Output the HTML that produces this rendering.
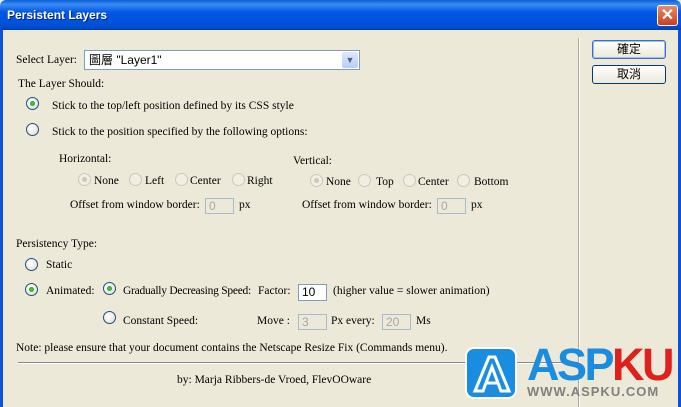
<!DOCTYPE html>
<html><head><meta charset="utf-8"><style>
*{margin:0;padding:0;box-sizing:border-box}
body{width:681px;height:407px;overflow:hidden;background:#ece9d8;font-family:"Liberation Serif","Noto Serif CJK SC",serif;font-size:11.5px;color:#000;position:relative}
.t{position:absolute;white-space:nowrap;line-height:14px}
.r{position:absolute;width:13px;height:13px;border-radius:50%;border:1px solid #1c5180;background:radial-gradient(circle at 40% 40%,#fff,#dcdad0)}
.r.on::after{content:"";position:absolute;left:3px;top:3px;width:5px;height:5px;border-radius:50%;background:radial-gradient(circle,#4cd24c,#1a8a1a)}
.r.d{border-color:#cac8bb;background:#f1efe2}
.r.d.on::after{background:#cac8bb}
.in{position:absolute;height:16px;border:1px solid #7f9db9;background:#fff;font-family:"Liberation Sans",sans-serif;font-size:12px;padding:0 3px;line-height:14px}
.in.d{background:#ece9d8;color:#a7a6aa;border-color:#a7bcd1}
.btn{position:absolute;width:74px;height:19px;border:1px solid #003c74;border-radius:3px;background:linear-gradient(#fff,#ece9d8);text-align:center;font-family:"Liberation Sans","Noto Sans CJK TC",sans-serif;font-size:12px;line-height:17px}
</style></head><body>
<div style="position:absolute;left:0;top:0;width:681px;height:30px;background:linear-gradient(#0a5fd8 0%,#3d8cf3 15%,#0058e6 40%,#0050d8 85%,#0040b8 100%);border-radius:6px 6px 0 0"></div>
<div class="t" style="left:7px;top:8px;color:#fff;font-family:'Liberation Sans',sans-serif;font-weight:bold;font-size:12px;text-shadow:1px 1px #0a246a">Persistent Layers</div>
<div style="position:absolute;left:657px;top:5px;width:21px;height:21px;border:1px solid #fff;border-radius:3px;background:linear-gradient(#e88a6c,#c8401c);color:#fff;text-align:center;font:bold 16px/19px 'Liberation Sans',sans-serif">✕</div>
<div style="position:absolute;left:0;top:30px;width:3px;height:377px;background:#0a52d8"></div>
<div style="position:absolute;right:0;top:30px;width:3px;height:377px;background:#0a52d8"></div>
<div style="position:absolute;left:578px;top:38px;width:1px;height:369px;background:#aca899"></div>
<div style="position:absolute;left:579px;top:38px;width:1px;height:369px;background:#fff"></div>
<div class="btn" style="left:592px;top:40px;border-color:#3c6ec8;box-shadow:inset 0 0 0 1px #9fc0f0">確定</div>
<div class="btn" style="left:592px;top:65px">取消</div>

<div class="t" style="left:16px;top:53px">Select Layer:</div>
<div style="position:absolute;left:84px;top:50px;width:276px;height:20px;border:1px solid #7f9db9;background:#fff"></div>
<div class="t" style="left:89px;top:53px;font-family:'Liberation Sans','Noto Sans CJK TC',sans-serif;font-size:12px">圖層 "Layer1"</div>
<div style="position:absolute;left:342px;top:52px;width:16px;height:16px;background:linear-gradient(#dde8fc,#b8cdf7);border-radius:2px;color:#4d6185;font-size:9px;text-align:center;line-height:16px">▼</div>
<div class="t" style="left:18px;top:77px">The Layer Should:</div>
<div class="r on" style="left:26px;top:97px"></div><div class="t" style="left:52px;top:99px">Stick to the top/left position defined by its CSS style</div>
<div class="r" style="left:26px;top:123px"></div><div class="t" style="left:52px;top:125px">Stick to the position specified by the following options:</div>

<div class="t" style="left:59px;top:152px">Horizontal:</div>
<div class="r d on" style="left:78px;top:173px"></div><div class="t" style="left:94px;top:174px">None</div>
<div class="r d" style="left:129px;top:173px"></div><div class="t" style="left:145px;top:174px">Left</div>
<div class="r d" style="left:175px;top:173px"></div><div class="t" style="left:190px;top:174px">Center</div>
<div class="r d" style="left:232px;top:173px"></div><div class="t" style="left:247px;top:174px">Right</div>
<div class="t" style="left:70px;top:198px">Offset from window border:</div>
<div class="in d" style="left:205px;top:198px;width:29px">0</div><div class="t" style="left:239px;top:198px">px</div>

<div class="t" style="left:293px;top:154px">Vertical:</div>
<div class="r d on" style="left:310px;top:174px"></div><div class="t" style="left:326px;top:175px">None</div>
<div class="r d" style="left:358px;top:174px"></div><div class="t" style="left:376px;top:175px">Top</div>
<div class="r d" style="left:403px;top:174px"></div><div class="t" style="left:418px;top:175px">Center</div>
<div class="r d" style="left:457px;top:174px"></div><div class="t" style="left:474px;top:175px">Bottom</div>
<div class="t" style="left:302px;top:198px">Offset from window border:</div>
<div class="in d" style="left:437px;top:198px;width:29px">0</div><div class="t" style="left:471px;top:198px">px</div>

<div class="t" style="left:16px;top:237px">Persistency Type:</div>
<div class="r" style="left:25px;top:258px"></div><div class="t" style="left:46px;top:258px">Static</div>
<div class="r on" style="left:25px;top:283px"></div><div class="t" style="left:46px;top:284px">Animated:</div>
<div class="r on" style="left:103px;top:282px"></div><div class="t" style="left:123px;top:284px;letter-spacing:-0.25px">Gradually Decreasing Speed:</div>
<div class="t" style="left:258px;top:284px">Factor:</div>
<div class="in" style="left:298px;top:284px;width:29px;height:17px;border-color:#7f9db9">10</div>
<div class="t" style="left:333px;top:284px">(higher value = slower animation)</div>
<div class="r" style="left:103px;top:311px"></div><div class="t" style="left:123px;top:314px">Constant Speed:</div>
<div class="t" style="left:257px;top:314px">Move :</div>
<div class="in d" style="left:298px;top:314px;width:29px">3</div>
<div class="t" style="left:331px;top:314px">Px every:</div>
<div class="in d" style="left:382px;top:314px;width:29px">20</div>
<div class="t" style="left:416px;top:314px">Ms</div>

<div class="t" style="left:16px;top:341px">Note: please ensure that your document contains the Netscape Resize Fix (Commands menu).</div>
<div style="position:absolute;left:18px;top:362px;width:560px;height:2px;border-top:1px solid #8a8a8a;border-bottom:1px solid #fff"></div>
<div class="t" style="left:177px;top:373px">by: Marja Ribbers-de Vroed, FlevOOware</div>

<div style="position:absolute;left:465px;top:347px;width:52px;height:52px;border-radius:9px;background:#1a8de0;border:2px solid #fff"></div>
<svg style="position:absolute;left:467px;top:349px" width="48" height="48" viewBox="0 0 48 48"><path d="M8 42 L22 8 L28 8 L42 42 L34 42 L25 18 L16 42 Z" fill="none" stroke="#fff" stroke-width="3"/><path d="M19 34 H31" stroke="#fff" stroke-width="3"/></svg>
<div class="t" style="left:527px;top:343px;font:bold 45px/44px 'Liberation Sans',sans-serif;letter-spacing:-2.5px"><span style="color:#1a8de0">ASP</span><span style="color:#e0201c">KU</span></div>
<div class="t" style="left:527px;top:385px;font:bold 13px/13px 'Liberation Sans',sans-serif;color:#808080;letter-spacing:1px">WWW.ASPKU.COM</div>
</body></html>
